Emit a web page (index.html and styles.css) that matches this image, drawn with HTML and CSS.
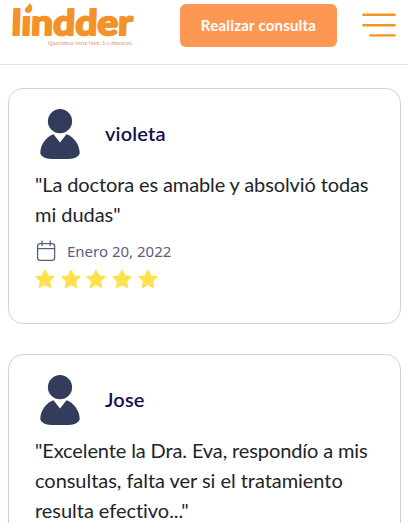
FILE: index.html
```html
<!DOCTYPE html>
<html lang="es">

<head>
    <title>Lindder</title>
    <meta charset="UTF-8">
    <meta name="viewport" content="width=device-width, initial-scale=1">
    <link rel="stylesheet" href="styles.css">
</head>

<body>
    <!-- shared icons -->
    <svg class="sprite">
        <symbol id="user" viewBox="0 0 50 50">
            <circle cx="25" cy="12.2" r="12.1" />
            <path d="M18.5 25.3 L25 33.5 L31.5 25.3 C38 27.5 44.7 35 44.7 44 C44.7 47 39 50 34 50 H16 C11 50 5.3 47 5.3 44 C5.3 35 12 27.5 18.5 25.3 Z" />
        </symbol>
        <symbol id="calendar" viewBox="0 0 20 22">
            <rect x="1.6" y="3.6" width="17" height="16.8" rx="2.4" />
            <path d="M1.6 8.6 H18.6 M6 1 V5.6 M14.2 1 V5.6" />
        </symbol>
        <symbol id="star" viewBox="0 0 20 20">
            <path d="M10 1.2 L12.7 6.9 L18.9 7.7 L14.4 12 L15.5 18.4 L10 15.4 L4.5 18.4 L5.6 12 L1.1 7.7 L7.3 6.9 Z" />
        </symbol>
    </svg>

    <header class="header">
        <svg class="logo" viewBox="0 0 126 48" width="126" height="48">
            <text class="logo-name" x="4.5" y="34.8" textLength="121" lengthAdjust="spacingAndGlyphs" transform="skewX(-2)">lındder</text>
            <path class="logo-flame" d="M21.4 3 C24.2 5.6 25.1 8 23.6 10.7 C22.1 13.5 17.7 13.7 16.9 10.8 C16.3 7.6 20.5 6.7 21.4 3 Z" />
            <text class="logo-slogan" x="40" y="45" textLength="85" lengthAdjust="spacingAndGlyphs">Queremos verte bien. Lo mereces.</text>
        </svg>
        <a class="btn" href="#">Realizar consulta</a>
        <svg class="menu" viewBox="0 0 34 26" width="34" height="26">
            <path d="M1.4 2.8 H32.6 M1.4 13.2 H32.6 M8.4 23.4 H32.6" />
        </svg>
    </header>

    <main class="reviews">
        <article class="card">
            <div class="user">
                <svg class="avatar"><use href="#user" /></svg>
                <h2 class="name">violeta</h2>
            </div>
            <p class="comment">"La doctora es amable y absolvió todas mi dudas"</p>
            <div class="date">
                <svg class="calendar"><use href="#calendar" /></svg>
                <span>Enero 20, 2022</span>
            </div>
            <div class="stars">
                <svg><use href="#star" /></svg>
                <svg><use href="#star" /></svg>
                <svg><use href="#star" /></svg>
                <svg><use href="#star" /></svg>
                <svg><use href="#star" /></svg>
            </div>
        </article>
        <article class="card">
            <div class="user">
                <svg class="avatar"><use href="#user" /></svg>
                <h2 class="name">Jose</h2>
            </div>
            <p class="comment">"Excelente la Dra. Eva, respondío a mis consultas, falta ver si el tratamiento resulta efectivo..."</p>
        </article>
    </main>
</body>

</html>
```
FILE: styles.css
```css
* {
    margin: 0;
    padding: 0;
    box-sizing: border-box;
}

body {
    height: 523px;
    overflow: hidden;
    background: #fff;
    font-family: Lato, sans-serif;
    font-variant-ligatures: none;
    color: #212529;
}

.sprite {
    display: none;
}

/* header */
.header {
    display: flex;
    align-items: flex-start;
    height: 65px;
    padding-left: 8px;
    border-bottom: 1px solid #dfe0ee;
}

.logo-name {
    font-size: 35px;
    font-weight: 700;
    fill: #f39229;
    stroke: #f39229;
    stroke-width: 2.2;
    stroke-linejoin: round;
}

.logo-flame {
    fill: #f39229;
}

.logo-slogan {
    font-family: "Liberation Serif", serif;
    font-size: 6px;
    fill: #f08a7c;
}

.btn {
    width: 157px;
    height: 43px;
    margin: 4px 0 0 46px;
    border-radius: 6px;
    background: #ff9754;
    color: #fff;
    font-size: 15px;
    font-weight: 700;
    letter-spacing: 0.2px;
    line-height: 43px;
    text-align: center;
    text-decoration: none;
    white-space: nowrap;
}

.menu {
    margin: 12px 0 0 25px;
    fill: none;
    stroke: #f79123;
    stroke-width: 2.4;
    stroke-linecap: round;
}

/* reviews */
.reviews {
    padding: 23px 7px 0 8px;
}

.card {
    height: 236px;
    margin-bottom: 30px;
    padding: 20px 26px;
    border: 1px solid #cdd2e0;
    border-radius: 15px;
}

.user {
    display: flex;
    align-items: center;
    gap: 20px;
    height: 50px;
}

.avatar {
    width: 50px;
    height: 50px;
    fill: #333c5b;
}

.name {
    padding-bottom: 2px;
    color: #14104b;
    font-size: 20px;
    font-weight: 600;
    letter-spacing: 0.15px;
}

.comment {
    margin-top: 10px;
    font-size: 20px;
    letter-spacing: -0.04px;
    line-height: 30px;
}

.comment::first-line {
    letter-spacing: -0.12px;
}

.date {
    display: flex;
    align-items: center;
    height: 22px;
    margin-top: 11px;
    color: #56607f;
    font-family: "Noto Sans", sans-serif;
    font-size: 15px;
}

.calendar {
    width: 20px;
    height: 22px;
    margin: 0 11px 0 1px;
    fill: none;
    stroke: #56607f;
    stroke-width: 1.3;
    stroke-linecap: round;
}

.stars {
    display: flex;
    gap: 5.7px;
    margin-top: 7px;
}

.stars svg {
    width: 20px;
    height: 20px;
    fill: #ffe14d;
    stroke: #ffe14d;
    stroke-width: 1.4;
    stroke-linejoin: round;
}
```
